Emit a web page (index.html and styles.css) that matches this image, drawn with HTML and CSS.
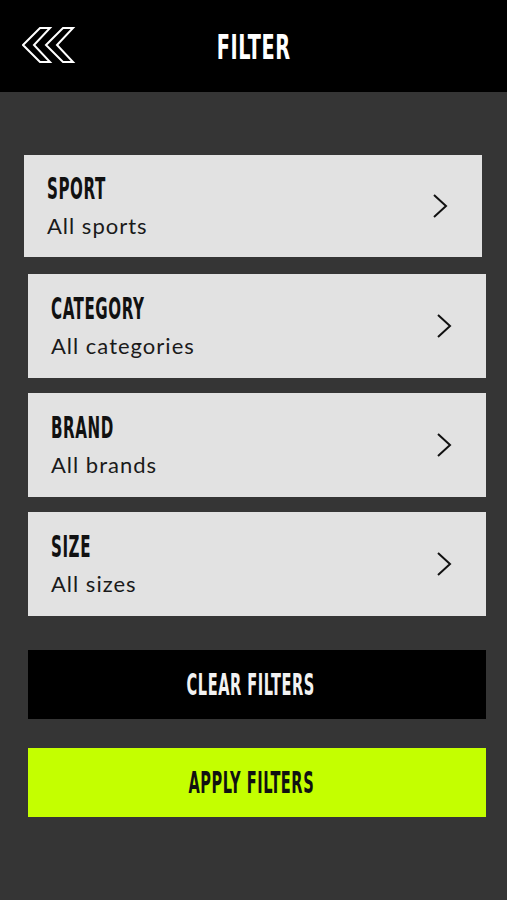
FILE: index.html
```html
<!DOCTYPE html>
<html>
<head>
<meta charset="utf-8">
<link rel="stylesheet" href="styles.css">
</head>
<body>
<header class="topbar">
    <svg class="back" width="54" height="40" viewBox="0 0 54 40">
        <polygon points="1,19 18,2 28,2 12,19 28,36 18,36" fill="none" stroke="#fff" stroke-width="2" stroke-linejoin="miter"/>
        <polygon points="24,19 41,2 51,2 35,19 51,36 41,36" fill="none" stroke="#fff" stroke-width="2" stroke-linejoin="miter"/>
    </svg>
    <h1 class="title"><span class="squeeze">FILTER</span></h1>
</header>

<main class="panel">
    <div class="card shifted">
        <div class="card-text">
            <div class="card-label"><span class="squeeze">SPORT</span></div>
            <div class="card-value">All sports</div>
        </div>
        <svg class="chev" width="16" height="26" viewBox="0 0 16 26"><polyline points="2,2 14,13 2,24" fill="none" stroke="#111" stroke-width="2"/></svg>
    </div>
    <div class="card">
        <div class="card-text">
            <div class="card-label"><span class="squeeze">CATEGORY</span></div>
            <div class="card-value">All categories</div>
        </div>
        <svg class="chev" width="16" height="26" viewBox="0 0 16 26"><polyline points="2,2 14,13 2,24" fill="none" stroke="#111" stroke-width="2"/></svg>
    </div>
    <div class="card">
        <div class="card-text">
            <div class="card-label"><span class="squeeze">BRAND</span></div>
            <div class="card-value">All brands</div>
        </div>
        <svg class="chev" width="16" height="26" viewBox="0 0 16 26"><polyline points="2,2 14,13 2,24" fill="none" stroke="#111" stroke-width="2"/></svg>
    </div>
    <div class="card">
        <div class="card-text">
            <div class="card-label"><span class="squeeze">SIZE</span></div>
            <div class="card-value">All sizes</div>
        </div>
        <svg class="chev" width="16" height="26" viewBox="0 0 16 26"><polyline points="2,2 14,13 2,24" fill="none" stroke="#111" stroke-width="2"/></svg>
    </div>

    <button class="btn btn-clear"><span class="squeeze">CLEAR FILTERS</span></button>
    <button class="btn btn-apply"><span class="squeeze">APPLY FILTERS</span></button>
</main>
</body>
</html>
```

FILE: styles.css
```css
html, body {
    margin: 0;
    padding: 0;
}
body {
    width: 507px;
    height: 900px;
    background: #353535;
    font-family: "DejaVu Sans Condensed", "DejaVu Sans", sans-serif;
}
.squeeze {
    display: inline-block;
    transform: scaleX(0.56);
    font-weight: bold;
    letter-spacing: 1px;
}
.topbar {
    height: 92px;
    background: #000;
    display: flex;
    align-items: center;
    justify-content: center;
    position: relative;
}
.back {
    position: absolute;
    left: 22px;
    top: 26px;
}
.title {
    margin: 0;
    color: #fff;
    font-size: 34px;
    line-height: 1;
    margin-top: 2px;
}
.title .squeeze {
    transform: scaleX(0.63);
}
.panel {
    display: flex;
    flex-direction: column;
    padding: 63px 21px 0 28px;
}
.card {
    height: 104px;
    background: #e2e2e2;
    display: flex;
    align-items: center;
    justify-content: space-between;
    padding: 0 34px 0 23px;
    margin-bottom: 15px;
}
.card.shifted {
    margin-left: -4px;
    margin-right: 4px;
    height: 102px;
    margin-bottom: 17px;
}
.card-label {
    font-size: 30px;
    line-height: 30px;
    color: #111;
    margin-top: 0;
}
.card-label .squeeze {
    transform-origin: left center;
}
.card-value {
    font-family: "Lato", sans-serif;
    font-size: 22px;
    letter-spacing: 1px;
    color: #1a1a1a;
    margin-top: 8px;
}
.btn {
    border: none;
    height: 69px;
    width: 100%;
    font-family: inherit;
    font-size: 30px;
    padding: 0 12px 0 0;
    cursor: pointer;
}
.btn .squeeze {
    transform: scaleX(0.54);
}
.btn-clear {
    background: #000;
    color: #f2f2f2;
    margin-top: 19px;
}
.btn-apply {
    background: #c4ff00;
    color: #111;
    margin-top: 29px;
}
```
